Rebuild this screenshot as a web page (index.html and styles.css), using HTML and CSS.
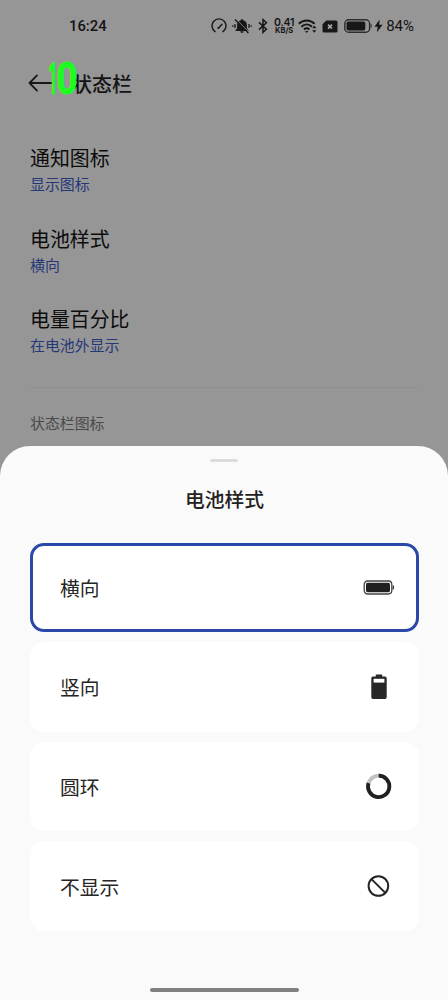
FILE: index.html
```html
<!DOCTYPE html>
<html lang="zh-CN">
<head>
<meta charset="utf-8">
<title>状态栏</title>
<link rel="stylesheet" href="styles.css">
</head>
<body>
<div class="screen">
  <header class="statusbar">
    <span class="clock">16:24</span>
    <div class="indicators">
      <svg class="gauge" width="16" height="16" viewBox="0 0 16 16" fill="none" stroke="#171717" stroke-width="1.4" stroke-linecap="round"><path d="M4 13.6A7 7 0 1 1 12 13.6M7.5 10 11 6.3"/><circle cx="7.4" cy="10" r="1" fill="#171717" stroke="none"/></svg>
      <svg class="mute" width="20" height="16" viewBox="0 0 20 16"><path d="M10 1.2c.8 0 1.2.4 1.3 1.1 2.2.6 3.6 2.2 3.6 4.5v3.6l1.5 1.7v.8H3.6v-.8l1.5-1.7V6.8c0-2.3 1.4-3.9 3.6-4.5.1-.7.5-1.1 1.3-1.1zM8.3 13.3h3.4c-.1 1-.8 1.6-1.7 1.6s-1.6-.6-1.7-1.6z" fill="#171717"/><path d="M4 1.2 17.2 14.4" stroke="#969696" stroke-width="1"/><path d="M3 1.5 16.4 14.9" stroke="#171717" stroke-width="1.4"/><path d="M3 6v4M.8 7.2v1.6M17 6v4M19.2 7.2v1.6" stroke="#171717" stroke-width="1.3"/></svg>
      <svg class="bluetooth" width="10" height="16" viewBox="0 0 10 16" fill="none" stroke="#171717" stroke-width="1.5"><path d="M1 4.4 8.4 11.3 5 14.4V1.6l3.4 3.1L1 11.6"/></svg>
      <div class="speed"><span class="rate">0.41</span><span class="unit">KB/S</span></div>
      <svg class="wifi" width="19" height="16" viewBox="0 0 19 16" fill="none" stroke="#171717" stroke-width="1.9"><path d="M.8 5.8c4.6-4.5 11.2-4.5 15.8 0M3.4 8.7c3.1-3 7.4-3 10.6 0M6 11.5c1.6-1.6 3.8-1.6 5.4 0"/><path d="m8.7 14.9-1.7-2h3.4z" fill="#171717" stroke="none"/><path d="M14.2 10.2l2.1-2.6 2.1 2.6zM14.2 12.2l2.1 2.6 2.1-2.6z" fill="#171717" stroke="none"/></svg>
      <svg class="sim" width="16" height="13" viewBox="0 0 16 13"><path d="M4.3.5H14A1.5 1.5 0 0 1 15.5 2v9a1.5 1.5 0 0 1-1.5 1.5H2A1.5 1.5 0 0 1 .5 11V4.3z" fill="#171717"/><path d="m6 4.6 4 4M10 4.6l-4 4" stroke="#aaa" stroke-width="1.5"/></svg>
      <svg class="battery" width="28" height="14" viewBox="0 0 28 14"><rect x=".8" y=".8" width="24.8" height="12.4" rx="3.8" fill="none" stroke="#2c2c2c" stroke-width="1.4"/><rect x="2.5" y="2.5" width="18.8" height="9" rx="1.8" fill="#171717"/><path d="M26.6 4.6c1.5.4 1.5 4.4 0 4.8z" fill="#2c2c2c"/></svg>
      <svg class="bolt" width="9" height="14" viewBox="0 0 9 14"><path d="M5.6.5.5 7.8h3.2L2.9 13.2 8.6 5.8H5.2z" fill="#171717"/></svg>
      <span class="percent">84%</span>
    </div>
  </header>
  <div class="appbar">
    <svg class="back" width="24" height="20" viewBox="0 0 24 20" fill="none" stroke="#181818" stroke-width="1.8" stroke-linecap="round" stroke-linejoin="round"><path d="M23 10H1.5M9 2.4 1.5 10 9 17.6"/></svg>
    <h1 class="page-title">状态栏</h1>
    <svg class="fps" width="32" height="52" viewBox="0 0 32 52"><text class="fps-text" y="41.5"><tspan x="0" textLength="10" lengthAdjust="spacingAndGlyphs">1</tspan><tspan x="8.5" textLength="21" lengthAdjust="spacingAndGlyphs">0</tspan></text></svg>
  </div>
  <main class="settings">
    <div class="setting"><div class="name">通知图标</div><div class="value">显示图标</div></div>
    <div class="setting"><div class="name">电池样式</div><div class="value">横向</div></div>
    <div class="setting"><div class="name">电量百分比</div><div class="value">在电池外显示</div></div>
  </main>
  <div class="section">状态栏图标</div>
  <section class="sheet">
    <div class="grip"></div>
    <h2 class="sheet-title">电池样式</h2>
    <div class="options">
      <div class="option selected"><span>横向</span>
        <svg width="32" height="16" viewBox="0 0 32 16"><rect x="1.2" y="1" width="27.6" height="13" rx="3.4" fill="none" stroke="#444" stroke-width="1.3"/><rect x="3" y="2.8" width="24" height="9.4" rx="1.6" fill="#202020"/><path d="M29.7 5c1.9.5 1.9 4.5 0 5z" fill="#333"/></svg></div>
      <div class="option"><span>竖向</span>
        <svg width="32" height="28" viewBox="0 0 32 28"><path d="M12.8 1.5h6.4v2H22A1.7 1.7 0 0 1 23.7 5.2v19.1A1.7 1.7 0 0 1 22 26H10a1.7 1.7 0 0 1-1.7-1.7V5.2A1.7 1.7 0 0 1 10 3.5h2.8z" fill="#272727"/><path d="M10.6 5.8h10.8v3.8H10.6z" fill="#fff"/></svg></div>
      <div class="option"><span>圆环</span>
        <svg width="32" height="28" viewBox="0 0 32 28" fill="none" stroke-width="3.7"><circle cx="15.7" cy="13.4" r="10.7" stroke="#c2c2c2"/><path d="M15.7 2.7A10.7 10.7 0 1 1 5.5 10.1" stroke="#202020"/></svg></div>
      <div class="option"><span>不显示</span>
        <svg width="32" height="28" viewBox="0 0 32 28" fill="none" stroke="#252525" stroke-width="2"><circle cx="15.4" cy="13" r="9.8"/><path d="m8.5 6.1 13.8 13.8"/></svg></div>
    </div>
    <div class="homebar"></div>
  </section>
</div>
</body>
</html>
```
FILE: styles.css
```css
* { box-sizing: border-box; }
body { margin: 0; background: #969696; font-family: "Noto Sans CJK SC", sans-serif; color: #141414; }
h1, h2 { margin: 0; font-weight: 500; }
svg { display: block; flex: none; }
.screen { width: 448px; height: 1000px; overflow: hidden; display: flex; flex-direction: column; background: #969696; }
.statusbar { height: 52px; flex: none; padding: 0 34px 0 69px; display: flex; align-items: center; justify-content: space-between; font-family: Roboto, sans-serif; font-size: 15px; font-weight: 500; }
.clock { font-size: 14.8px; }
.indicators { display: flex; align-items: center; }
.mute { margin-left: 5px; }
.bluetooth { margin-left: 6px; }
.speed { width: 22px; margin-left: 5px; display: flex; flex-direction: column; align-items: center; font-family: Inter, sans-serif; font-weight: 600; }
.rate { font-size: 10.5px; line-height: 9px; letter-spacing: -.2px; }
.unit { font-size: 7.5px; line-height: 8px; font-weight: 700; }
.wifi { margin-left: 3px; }
.sim { margin-left: 5px; }
.battery { margin-left: 6px; }
.bolt { margin-left: 2px; }
.percent { margin-left: 3px; font-weight: 400; }
.appbar { position: relative; height: 60px; flex: none; padding: 2px 29px 0 28px; display: flex; align-items: center; gap: 20px; }
.page-title { margin-top: 1px; font-size: 20px; line-height: 30px; }
.fps { position: absolute; left: 48px; top: 0; overflow: visible; }
.fps-text { font-family: Roboto, sans-serif; font-weight: 700; font-size: 44px; fill: #1cff1c; stroke: #1cff1c; stroke-width: .8; stroke-linejoin: miter; }
.settings { margin: 0 30px; padding: 32px 0 30px; display: flex; flex-direction: column; gap: 29px; border-bottom: 1px solid #909090; }
.name { font-size: 19.9px; line-height: 28px; color: #0c0c0c; }
.value { margin-top: 1px; font-size: 14.9px; line-height: 22px; color: #263778; }
.setting { height: 51.5px; }
.section { padding: 23px 30px 0; font-size: 14.9px; line-height: 24px; height: 58px; flex: none; color: #4a4a4a; }
.sheet { flex: none; height: 554px; margin-top: auto; padding: 13px 29px 8px 30px; background: #fafafa; border-radius: 30px 30px 0 0; display: flex; flex-direction: column; align-items: center; }
.grip { width: 28px; height: 3px; margin-right: 1px; border-radius: 2px; background: #dcdcdc; }
.sheet-title { margin-top: 22px; font-size: 19.8px; line-height: 30px; color: #222; }
.options { width: 100%; margin-top: 28.5px; display: flex; flex-direction: column; gap: 10px; }
.option { height: 89.6px; padding: 1px 24px 0 30px; display: flex; align-items: center; justify-content: space-between; background: #fff; border-radius: 14px; font-size: 19.8px; line-height: 30px; color: #262626; }
.selected { border: 2.5px solid #2b47a8; border-width: 3px; padding: 1px 21px 0 27px; }
.homebar { width: 149px; height: 4px; margin-top: auto; margin-right: 1px; border-radius: 2px; background: #808080; }
```
